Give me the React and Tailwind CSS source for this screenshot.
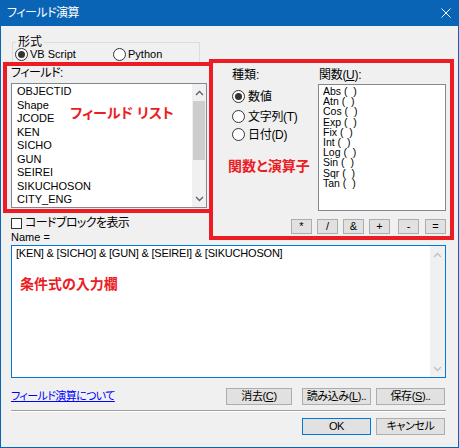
import React from "react";

const fields = ["OBJECTID", "Shape", "JCODE", "KEN", "SICHO", "GUN", "SEIREI", "SIKUCHOSON", "CITY_ENG"];
const funcs = ["Abs", "Atn", "Cos", "Exp", "Fix", "Int", "Log", "Sin", "Sqr", "Tan"];

function Radio({ checked }) {
    return (
        <span className="flex h-[13px] w-[13px] shrink-0 items-center justify-center rounded-full border border-[#333333] bg-white">
            {checked && <span className="h-[7px] w-[7px] rounded-full bg-[#333333]" />}
        </span>
    );
}

function Chevron({ up, className = "" }) {
    return (
        <svg width="9" height="6" viewBox="0 0 9 6" className={className}>
            <path
                d={up ? "M1 5 L4.5 1.5 L8 5" : "M1 1 L4.5 4.5 L8 1"}
                fill="none"
                stroke="currentColor"
                strokeWidth="1.3"
            />
        </svg>
    );
}

function Btn({ children, className = "" }) {
    return (
        <div className={`flex h-[17px] items-center justify-center whitespace-nowrap border bg-[#E1E1E1] text-[11px] leading-none tracking-[-0.4px] ${className}`}>
            {children}
        </div>
    );
}

function OpBtn({ label, className = "" }) {
    return (
        <div className={`flex h-[15px] w-[21px] items-center justify-center border border-[#ADADAD] bg-[#E1E1E1] text-[11px] leading-none ${className}`}>
            {label}
        </div>
    );
}

export default function App() {
    return (
        <div className="relative flex h-[448px] w-[459px] flex-col overflow-hidden border-x border-b border-[#0A64B5] bg-[#F0F0F0] font-['Liberation_Sans','Noto_Sans_CJK_JP',sans-serif] text-[12px] text-black [font-feature-settings:'palt']">
            {/* title bar */}
            <div className="flex h-[26px] shrink-0 items-center justify-between bg-[#0A64B5] pl-[6px] pr-[7px] text-white">
                <span className="leading-none tracking-[-0.5px]">フィールド演算</span>
                <svg width="10" height="10" viewBox="0 0 10 10">
                    <path d="M0.5 0.5 L9.5 9.5 M9.5 0.5 L0.5 9.5" stroke="white" strokeWidth="1" />
                </svg>
            </div>

            <div className="flex flex-col pl-[10px] pr-[12px]">
                {/* top section */}
                <div className="flex h-[204px] items-start">
                    {/* left column */}
                    <div className="flex w-[196px] flex-col">
                        <fieldset className="ml-[1px] mt-[9px] h-[29px] w-[188px] border border-[#DCDCDC]">
                            <legend className="ml-[3px] px-[2px] leading-[14px]">形式</legend>
                            <div className="-mt-[1px] flex h-[13px] items-center pl-[2px] text-[11px]">
                                <div className="flex w-[98px] items-center gap-[2px]">
                                    <Radio checked />
                                    <span>VB Script</span>
                                </div>
                                <div className="flex items-center gap-[2px]">
                                    <Radio />
                                    <span>Python</span>
                                </div>
                            </div>
                        </fieldset>
                        <div className="mt-[2px] leading-[14px] tracking-[-0.5px]">フィールド:</div>
                        <div className="mt-[3px] flex h-[125px] border border-[#828790] bg-white">
                            <div className="flex-1 pl-[5px] pt-[1px] text-[11px] leading-[13.5px]">
                                {fields.map((f) => (
                                    <div key={f}>{f}</div>
                                ))}
                            </div>
                            <div className="flex w-[14px] flex-col items-center bg-[#F0F0F0] text-[#606060]">
                                <div className="flex h-[17px] items-center">
                                    <Chevron up />
                                </div>
                                <div className="h-[59px] w-[12px] bg-[#CDCDCD]" />
                                <div className="flex-1" />
                                <div className="flex h-[17px] items-center">
                                    <Chevron />
                                </div>
                            </div>
                        </div>
                        <div className="mt-[9px] flex items-center gap-[3px] leading-[12px] tracking-[-0.6px]">
                            <span className="h-[11px] w-[11px] border border-[#333333] bg-white" />
                            <span>コードブロックを表示</span>
                        </div>
                    </div>

                    {/* right column */}
                    <div className="ml-[23px] flex w-[216px] flex-col">
                        <div className="mt-[42px] flex">
                            <div className="flex w-[88px] flex-col pl-[2px]">
                                <div className="leading-[14px]">種類:</div>
                                <div className="mt-[8px] flex h-[13px] items-center gap-[3px]">
                                    <Radio checked />
                                    <span>数値</span>
                                </div>
                                <div className="mt-[7px] flex h-[13px] items-center gap-[3px] tracking-[-0.3px]">
                                    <Radio />
                                    <span>文字列(T)</span>
                                </div>
                                <div className="mt-[5px] flex h-[13px] items-center gap-[3px] tracking-[-0.3px]">
                                    <Radio />
                                    <span>日付(D)</span>
                                </div>
                            </div>
                            <div className="flex w-[128px] flex-col">
                                <div className="pl-[1px] leading-[14px] tracking-[-0.3px]">
                                    関数(<span className="underline">U</span>):
                                </div>
                                <div className="mt-[2px] h-[127px] border border-[#828790] bg-white px-[4px] pt-[1px] text-[10.5px] leading-[10.2px]">
                                    {funcs.map((f) => (
                                        <div key={f} className="whitespace-pre">{f} (  )</div>
                                    ))}
                                </div>
                            </div>
                        </div>
                        <div className="mt-[8px] flex justify-end">
                            <OpBtn label="*" />
                            <OpBtn label="/" className="ml-[5px]" />
                            <OpBtn label="&" className="ml-[5px]" />
                            <OpBtn label="+" className="ml-[5px]" />
                            <OpBtn label="-" className="ml-[8px]" />
                            <OpBtn label="=" className="ml-[6px]" />
                        </div>
                    </div>
                </div>

                {/* expression */}
                <div className="text-[11px] leading-[14px]">Name =</div>
                <div className="mt-[1px] flex h-[133px] border border-[#0078D7] bg-white">
                    <div className="flex-1 pl-[4px] pt-[1px] text-[11px] leading-[13px] tracking-[-0.2px]">
                        [KEN] &amp; [SICHO] &amp; [GUN] &amp; [SEIREI] &amp; [SIKUCHOSON]
                    </div>
                    <div className="flex w-[15px] flex-col items-center justify-between bg-[#F0F0F0] text-[#C0C0C0]">
                        <div className="flex h-[17px] items-center">
                            <Chevron up />
                        </div>
                        <div className="flex h-[17px] items-center">
                            <Chevron />
                        </div>
                    </div>
                </div>

                {/* bottom buttons */}
                <div className="mt-[10px] flex h-[17px] items-center">
                    <span className="text-[11px] leading-none tracking-[-0.6px] text-[#0000FF] underline">フィールド演算について</span>
                    <Btn className="ml-auto w-[66px] border-[#ADADAD]">
                        消去(<span className="underline">C</span>)
                    </Btn>
                    <Btn className="ml-[10px] w-[69px] border-[#ADADAD]">
                        読み込み(<span className="underline">L</span>)..
                    </Btn>
                    <Btn className="ml-[5px] mr-[1px] w-[69px] border-[#ADADAD]">
                        保存(<span className="underline">S</span>)..
                    </Btn>
                </div>

                <div className="mt-[5px] h-[2px] border-t border-b border-t-[#A0A0A0] border-b-white" />

                <div className="mt-[6px] flex h-[17px] justify-end">
                    <Btn className="w-[69px] border-[#0078D7]">OK</Btn>
                    <Btn className="ml-[5px] mr-[1px] w-[69px] border-[#ADADAD]">キャンセル</Btn>
                </div>
            </div>

            {/* red annotations */}
            <div className="absolute left-[2px] top-[62px] h-[151px] w-[210px] border-[4px] border-[#EC1C24]" />
            <div className="absolute left-[208px] top-[59px] h-[181px] w-[245px] border-[4px] border-[#EC1C24]" />
            <div className="absolute left-[69px] top-[104px] text-[14px] font-bold leading-[18px] text-[#EC1C24]">フィールド リスト</div>
            <div className="absolute left-[227px] top-[157px] text-[14px] font-bold leading-[18px] text-[#EC1C24]">関数と演算子</div>
            <div className="absolute left-[19px] top-[275px] text-[14px] font-bold leading-[18px] text-[#EC1C24]">条件式の入力欄</div>
        </div>
    );
}
